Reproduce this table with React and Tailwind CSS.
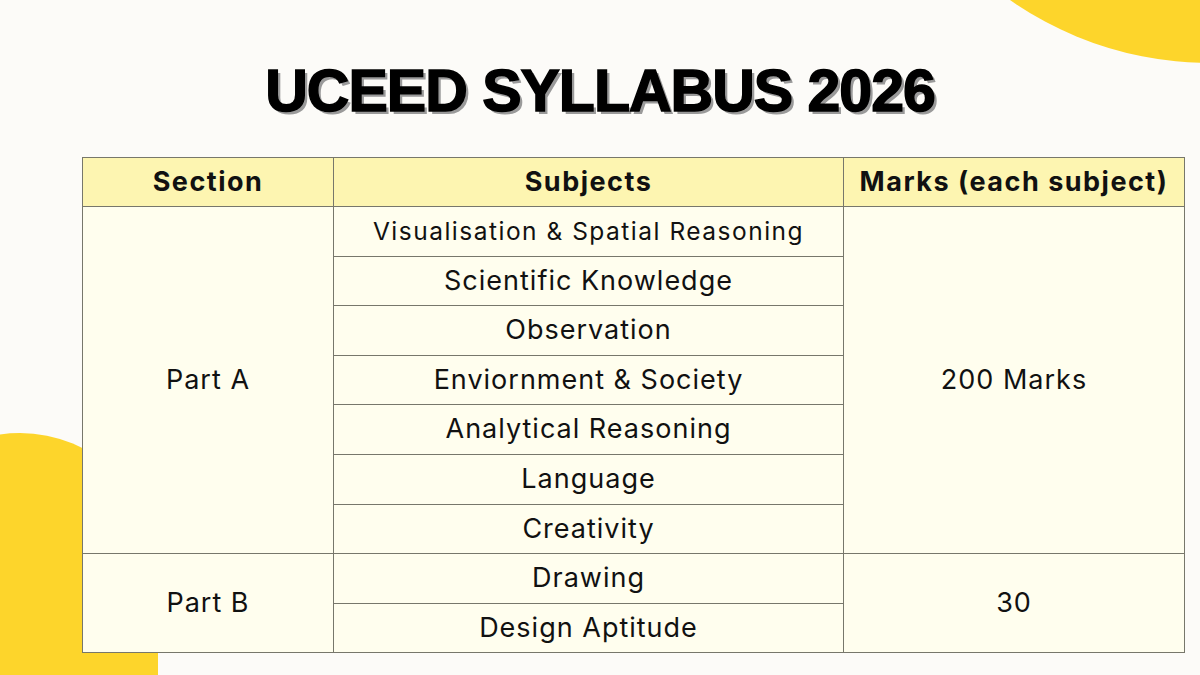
import React from 'react'

const partA = [
  'Visualisation & Spatial Reasoning',
  'Scientific Knowledge',
  'Observation',
  'Enviornment & Society',
  'Analytical Reasoning',
  'Language',
  'Creativity',
]

const partB = ['Drawing', 'Design Aptitude']

export default function App() {
  const cell = 'border border-[#77776b] text-center align-middle h-[49.6px] p-0'

  return (
    <div className="relative w-[1200px] h-[675px] overflow-hidden bg-[#fcfbf8] font-['Inter',sans-serif] text-[#111]">
      {/* yellow blobs */}
      <div className="absolute left-[861px] top-[-635px] w-[698px] h-[698px] rounded-full bg-[#fdd52b]" />
      <div className="absolute left-[-118px] top-[433px] w-[276px] h-[400px] rounded-t-full bg-[#fdd52b]" />

      <div className="relative flex flex-col">
        <h1 className="self-center mt-[59px] text-[59px] leading-[64px] font-bold tracking-[-1px] text-black font-['Liberation_Sans',Arial,sans-serif] [-webkit-text-stroke:1.5px_black] [text-shadow:3px_3px_0_#9a9a9a]">
          UCEED SYLLABUS 2026
        </h1>

        <table className="mt-[34px] ml-[82px] w-[1102px] border-collapse table-fixed">
          <colgroup>
            <col className="w-[251px]" />
            <col className="w-[510px]" />
            <col className="w-[341px]" />
          </colgroup>
          <thead>
            <tr className="bg-[#fdf5b1]">
              <th className={`${cell} h-[49px] text-[27px] font-bold tracking-[1.5px]`}>Section</th>
              <th className={`${cell} h-[49px] text-[27px] font-bold tracking-[1.5px]`}>Subjects</th>
              <th className={`${cell} h-[49px] text-[27px] font-bold tracking-[1.5px]`}>Marks (each subject)</th>
            </tr>
          </thead>
          <tbody className="bg-[#fffeee] text-[27px] tracking-[1px]">
            {partA.map((s, i) => (
              <tr key={s}>
                {i === 0 && (
                  <td rowSpan={partA.length} className={cell}>
                    Part A
                  </td>
                )}
                <td className={`${cell} ${i === 0 ? 'text-[24.5px] tracking-[1.5px]' : ''}`}>{s}</td>
                {i === 0 && (
                  <td rowSpan={partA.length} className={cell}>
                    200 Marks
                  </td>
                )}
              </tr>
            ))}
            {partB.map((s, i) => (
              <tr key={s}>
                {i === 0 && (
                  <td rowSpan={partB.length} className={cell}>
                    Part B
                  </td>
                )}
                <td className={cell}>{s}</td>
                {i === 0 && (
                  <td rowSpan={partB.length} className={cell}>
                    30
                  </td>
                )}
              </tr>
            ))}
          </tbody>
        </table>
      </div>
    </div>
  )
}
